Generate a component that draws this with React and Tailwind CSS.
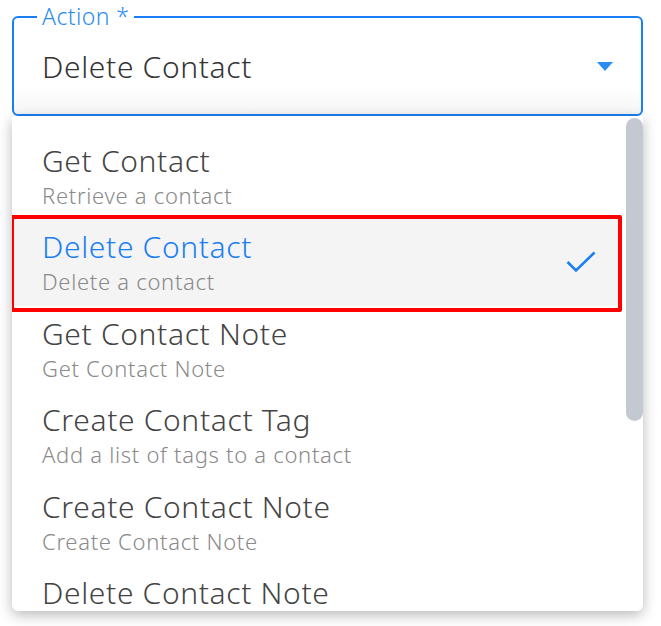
import React from "react";

const items = [
  { title: "Get Contact", sub: "Retrieve a contact" },
  { title: "Delete Contact", sub: "Delete a contact", selected: true },
  { title: "Get Contact Note", sub: "Get Contact Note" },
  { title: "Create Contact Tag", sub: "Add a list of tags to a contact" },
  { title: "Create Contact Note", sub: "Create Contact Note" },
  { title: "Delete Contact Note", sub: "Delete Contact Note" },
];

export default function App() {
  return (
    <div
      className="w-[661px] h-[626px] bg-white overflow-hidden"
      style={{ fontFamily: '"Noto Sans", "Open Sans", sans-serif' }}
    >
      <div className="pl-[12px] pt-[16px] w-[643px] flex flex-col">
        <div className="relative h-[100px] border-2 border-[#1a7ff5] rounded-[6px] bg-gradient-to-b from-white from-70% to-[#f6f6f6] flex items-center pl-[28px] pr-[28px]">
          <span className="absolute left-[23px] -top-[15px] bg-white px-[5px] text-[23px] leading-[26px] font-light tracking-[0.4px] text-[#2b8cf2]">
            Action *
          </span>
          <span className="flex-1 text-[30px] leading-[34px] font-light tracking-[0.65px] text-[#333333] mt-[2px]">
            Delete Contact
          </span>
          <svg width="16" height="9" viewBox="0 0 16 9" className="mt-[1px]">
            <path d="M0 0 L16 0 L8 9 Z" fill="#2b8cf2" />
          </svg>
        </div>
        <div className="relative h-[495px] w-[631px] bg-white rounded-b-[6px] shadow-[0_4px_14px_rgba(0,0,0,0.28)] overflow-hidden pt-[16.5px] flex flex-col">
          <div className="absolute right-0 top-[2px] w-[17px] h-[303px] rounded-full bg-[#c4c9d1]" />
          {items.map((it) => (
            <div
              key={it.title}
              className={`relative shrink-0 h-[86.5px] flex items-center pl-[30px] pr-[26px] ${it.selected ? "bg-[#f4f4f4] w-[610px]" : ""}`}
            >
              <div className="flex-1 self-start pt-[11px] flex flex-col">
                <div
                  className={`text-[30px] leading-[34px] font-light tracking-[0.65px] ${it.selected ? "text-[#1a7ff5]" : "text-[#444444]"}`}
                >
                  {it.title}
                </div>
                <div className="mt-[3px] text-[22px] leading-[28px] font-light tracking-[0.7px] text-[#8a8a8a]">
                  {it.sub}
                </div>
              </div>
              {it.selected && (
                <>
                  <svg width="30" height="22" viewBox="0 0 30 22">
                    <path
                      d="M1.5 11 L10 19.5 L28.5 1.5"
                      fill="none"
                      stroke="#1a7ff5"
                      strokeWidth="2.6"
                    />
                  </svg>
                  <div className="absolute -left-[2px] -top-[4px] w-[612px] h-[97px] border-4 border-[#ff0000] rounded-[2px] pointer-events-none" />
                </>
              )}
            </div>
          ))}
        </div>
      </div>
    </div>
  );
}
